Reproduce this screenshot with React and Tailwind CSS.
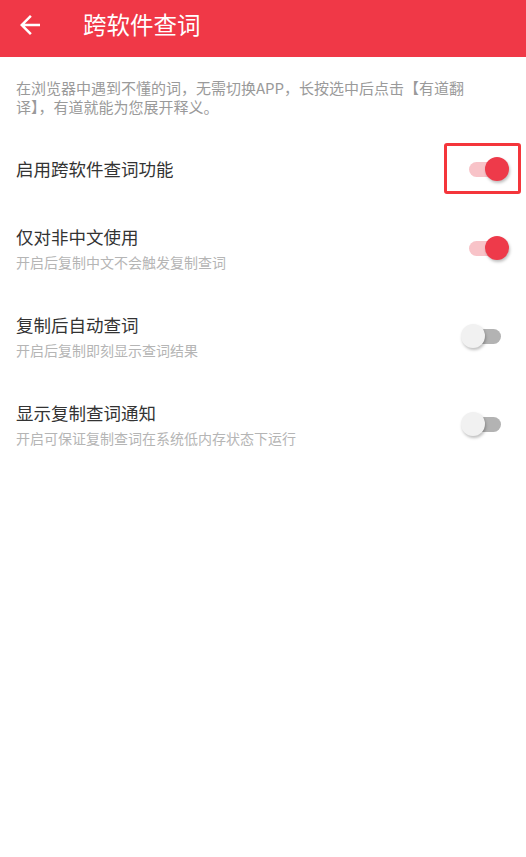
import React, { useState } from "react";

const FONT = { fontFamily: '"Noto Sans CJK SC", "Noto Sans", Roboto, sans-serif' };

function Toggle({ on, onChange }) {
  return (
    <button
      onClick={onChange}
      className="relative w-[48px] h-[24px] shrink-0 focus:outline-none"
    >
      <span
        className={`absolute left-[8px] top-[4.5px] w-[32px] h-[15px] rounded-full ${
          on ? "bg-[#f8c3c8]" : "bg-[#b3b3b3]"
        }`}
      />
      <span
        className={`absolute top-0 w-[24px] h-[24px] rounded-full shadow-[1px_2px_3px_rgba(0,0,0,0.25)] ${
          on ? "left-[24px] bg-[#ee3a4a]" : "left-0 bg-[#f1f1f1]"
        }`}
      />
    </button>
  );
}

function Row({ title, sub, on, onChange, highlight, className }) {
  return (
    <div className={`relative flex items-center pl-4 pr-[17px] ${className}`}>
      <div className="flex-1 min-w-0">
        <div className="text-[17.5px] leading-[24px] text-[#333]">{title}</div>
        {sub && (
          <div className="mt-[3px] text-[14px] leading-[20px] text-[#b5b5b5]">{sub}</div>
        )}
      </div>
      <Toggle on={on} onChange={onChange} />
      {highlight && (
        <div className="absolute right-[5px] top-[18px] w-[77px] h-[51px] border-[3px] border-[#f4353b] rounded-[3px] pointer-events-none" />
      )}
    </div>
  );
}

export default function App() {
  const [vals, setVals] = useState([true, true, false, false]);
  const flip = (i) => setVals((v) => v.map((x, j) => (j === i ? !x : x)));

  return (
    <div className="w-[526px] h-[857px] bg-white" style={FONT}>
      {/* header */}
      <div className="h-[57px] bg-[#f03847] flex items-center">
        <svg width="30" height="30" viewBox="0 0 24 24" className="ml-[15px] mb-[7px]" fill="#fff">
          <path d="M20 11H7.83l5.59-5.59L12 4l-8 8 8 8 1.41-1.41L7.83 13H20v-2z" />
        </svg>
        <div className="ml-[38px] mb-[7px] text-[23.5px] text-white leading-none">跨软件查词</div>
      </div>

      {/* description */}
      <div className="px-4 pt-[21px] pb-[9px] text-[15px] leading-[19px] text-[#9a9a9a]">
        <div>在浏览器中遇到不懂的词，无需切换APP，长按选中后点击【有道翻</div>
        <div>译】，有道就能为您展开释义。</div>
      </div>

      <Row
        className="h-[88px]"
        title="启用跨软件查词功能"
        on={vals[0]}
        onChange={() => flip(0)}
        highlight
      />
      <Row
        className="h-[79px] pb-[9px]"
        title="仅对非中文使用"
        sub="开启后复制中文不会触发复制查词"
        on={vals[1]}
        onChange={() => flip(1)}
      />
      <Row
        className="h-[88px]"
        title="复制后自动查词"
        sub="开启后复制即刻显示查词结果"
        on={vals[2]}
        onChange={() => flip(2)}
      />
      <Row
        className="h-[88px]"
        title="显示复制查词通知"
        sub="开启可保证复制查词在系统低内存状态下运行"
        on={vals[3]}
        onChange={() => flip(3)}
      />
    </div>
  );
}
